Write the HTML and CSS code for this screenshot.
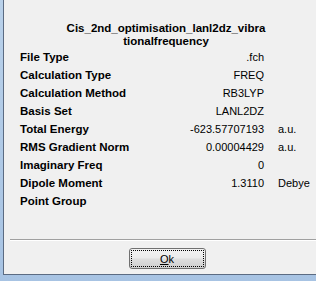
FILE: index.html
```html
<!DOCTYPE html>
<html>
<head>
<meta charset="utf-8">
<link rel="stylesheet" href="styles.css">
</head>
<body>
<div class="frame">
  <div class="dialog">
    <div class="title">Cis_2nd_optimisation_lanl2dz_vibra<br>tionalfrequency</div>
    <div class="props">
      <div class="label">File Type</div><div class="value">.fch</div><div class="unit"></div>
      <div class="label">Calculation Type</div><div class="value">FREQ</div><div class="unit"></div>
      <div class="label">Calculation Method</div><div class="value">RB3LYP</div><div class="unit"></div>
      <div class="label">Basis Set</div><div class="value">LANL2DZ</div><div class="unit"></div>
      <div class="label">Total Energy</div><div class="value">-623.57707193</div><div class="unit">a.u.</div>
      <div class="label">RMS Gradient Norm</div><div class="value">0.00004429</div><div class="unit">a.u.</div>
      <div class="label">Imaginary Freq</div><div class="value">0</div><div class="unit"></div>
      <div class="label">Dipole Moment</div><div class="value">1.3110</div><div class="unit">Debye</div>
      <div class="label">Point Group</div><div class="value"></div><div class="unit"></div>
    </div>
    <div class="spacer"></div>
    <div class="separator"></div>
    <div class="actions">
      <button class="btn"><span class="u">O</span>k</button>
    </div>
  </div>
</div>
</body>
</html>
```
FILE: styles.css
```css
html, body {
  margin: 0;
  padding: 0;
  width: 316px;
  height: 281px;
  overflow: hidden;
}
body {
  background: linear-gradient(180deg, #b9d1ea 0%, #a7c3e3 100%);
  font-family: "Liberation Sans", Arial, sans-serif;
  font-size: 11px;
  color: #000;
}
.frame {
  box-sizing: border-box;
  height: 281px;
  padding: 0 3px 6px 3px;
  display: flex;
}
.dialog {
  flex: 1;
  background: #f0f0f0;
  border: 1px solid #5b6b82;
  border-top: none;
  display: flex;
  flex-direction: column;
}
.title {
  font-weight: bold;
  text-align: center;
  line-height: 13px;
  padding-top: 22px;
  font-size: 11.5px;
}
.props {
  display: grid;
  grid-template-columns: 130px 100px 50px;
  column-gap: 14px;
  grid-auto-rows: 18px;
  align-items: center;
  padding: 0 0 0 16px;
}
.label {
  font-weight: bold;
  font-size: 11.5px;
  white-space: nowrap;
}
.value {
  text-align: right;
  white-space: nowrap;
}
.unit {
  white-space: nowrap;
}
.spacer {
  flex: 1;
}
.separator {
  margin: 0 4px 0 6px;
  border-top: 1px solid #a0a0a0;
  border-bottom: 1px solid #ffffff;
}
.actions {
  display: flex;
  justify-content: center;
  padding: 7px 0 5px 0;
}
.btn {
  width: 77px;
  height: 21px;
  box-sizing: border-box;
  border: 1px solid #707070;
  border-radius: 3px;
  background: linear-gradient(180deg, #f2f2f2 0%, #ebebeb 45%, #dddddd 55%, #cfcfcf 100%);
  font-family: "Liberation Sans", Arial, sans-serif;
  font-size: 11px;
  color: #000;
  padding: 0;
  outline: 1px dotted #000;
  outline-offset: -3px;
  margin-left: 2px;
}
.u {
  text-decoration: underline;
}
```
